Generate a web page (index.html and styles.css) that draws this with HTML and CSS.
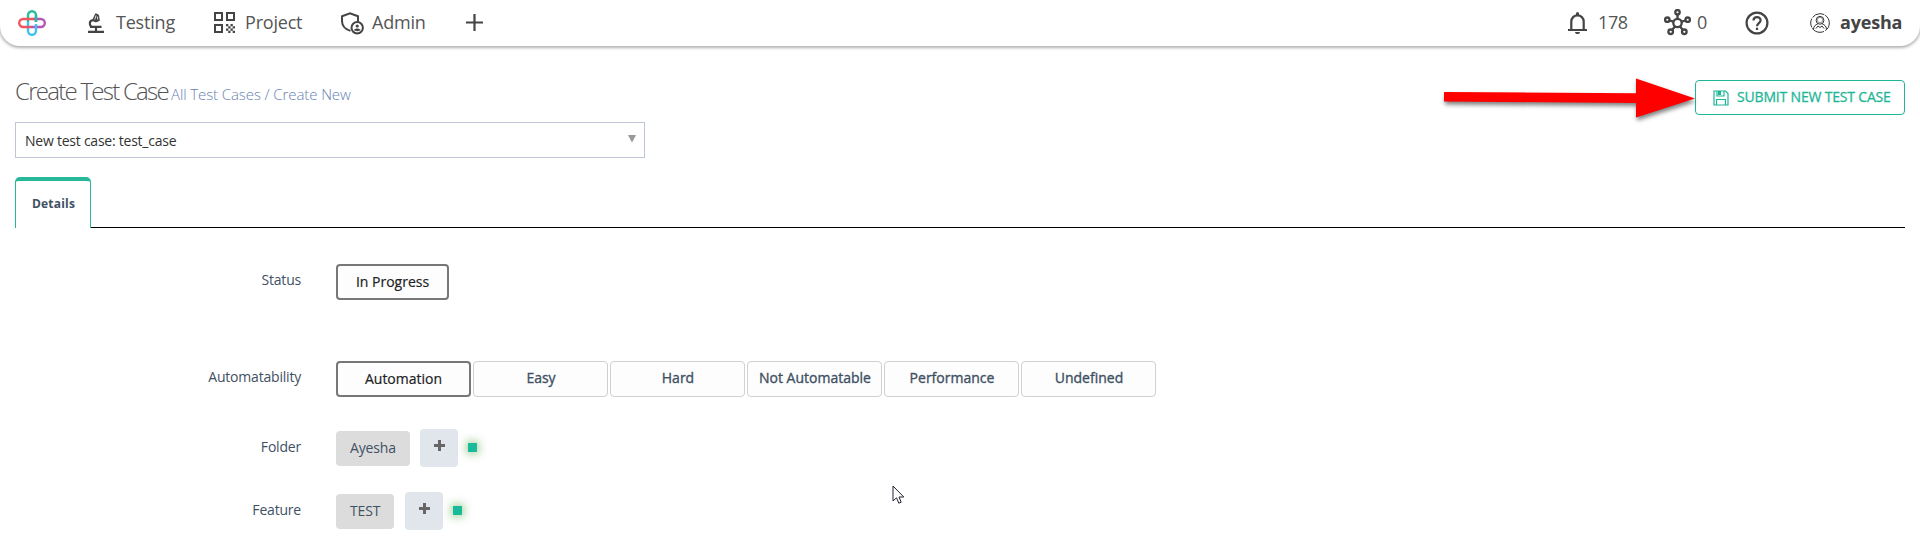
FILE: index.html
```html
<!DOCTYPE html>
<html lang="en">
<head>
<meta charset="utf-8">
<title>Create Test Case</title>
<link rel="stylesheet" href="styles.css">
</head>
<body>
<header class="topbar">
  <svg class="logo" width="28" height="28" viewBox="0 0 28 28" fill="none" stroke-width="2.4">
    <path d="M10 13V6.200a4 4 0 0 1 8 0V13" stroke="#27bd9c"/>
    <path d="M15 10h7.800a4 4 0 0 1 0 8H13" stroke="#b755b4"/>
    <path d="M18 15v6.800a4 4 0 0 1-8 0V13" stroke="#3fc1f5"/>
    <path d="M16 10H5.200a4 4 0 0 0 0 8H13" stroke="#f0555f"/>
    <path d="M18 6v7" stroke="#27bd9c"/>
  </svg>
  <nav class="menu">
    <a class="item testing">
      <svg width="18" height="22" viewBox="0 0 18 22" fill="none" stroke="#444" stroke-width="2.200">
        <path d="M1 19.800h16M9 19v-4M3 14.900h11.500"/><path d="M6 8.200C2.300 8.700 2 12.300 4.200 14.800"/>
        <path d="M5.500 8.500 8.700 1.700l2.800 1.400.8 5.400-3.400 1.400z" fill="#444" stroke-width="1"/><path d="m9 3.500-1.200 4M10.300 4.500l.5 3" stroke="#fff" stroke-width=".8"/>
      </svg><span>Testing</span></a>
    <a class="item project">
      <svg width="21" height="21" viewBox="0 0 21 21" fill="none" stroke="#444" stroke-width="2">
        <path d="M1 1h7v7H1zM13 1h7v7h-7zM1 13h7v7H1z"/>
        <path fill="#444" stroke="none" d="M12 12h2.300v2.300H12zM16.500 12h2.300v2.300h-2.300zM14.200 14.200h2.300v2.300h-2.300zM18.700 14.200H21v2.300h-2.300zM12 16.400h2.300v2.300H12zM16.500 16.400h2.300v2.300h-2.300zM14.200 18.700h2.300V21h-2.300zM18.700 18.700H21V21h-2.300z"/>
      </svg><span>Project</span></a>
    <a class="item admin">
      <svg width="23" height="23" viewBox="0 0 23 23" fill="none" stroke="#444" stroke-width="2">
        <path d="M9.500 18.900C4.300 17.500 1 13.500 1 9V4.300l8-3 8 3V9.500"/>
        <circle cx="16.200" cy="15.800" r="5.700"/><circle cx="16.200" cy="14" r="1.600" fill="#444" stroke="none"/>
        <path d="M12.900 18c1.300-2 5.300-2 6.600 0-1.500 1.500-5.100 1.500-6.600 0z" fill="#444" stroke="none"/>
      </svg><span>Admin</span></a>
    <a class="item add">
      <svg width="17" height="17" viewBox="0 0 17 17" stroke="#444" stroke-width="2.200"><path d="M8.500 0v17M0 8.500h17"/></svg></a>
  </nav>
  <div class="tools">
    <a class="item bell">
      <svg width="19" height="22" viewBox="0 0 19 22" fill="none" stroke="#444" stroke-width="2.200">
        <path d="M0 18h19M3.300 17.500V9.500a6.200 6.200 0 0 1 12.400 0v8"/>
        <path d="M8 3V1.500a1.500 1.500 0 0 1 3 0V3zM7 20h5a2.500 2.100 0 0 1-5 0z" fill="#444" stroke="none"/>
      </svg><span>178</span></a>
    <a class="item hub">
      <svg width="27" height="27" viewBox="0 0 27 27" fill="none" stroke="#444" stroke-width="2.300">
        <circle cx="13.500" cy="14" r="4.200"/><circle cx="13.500" cy="3.300" r="2.200"/><circle cx="3.300" cy="10.700" r="2.200"/><circle cx="23.700" cy="10.700" r="2.200"/><circle cx="6.700" cy="22.800" r="2.300"/><circle cx="20.300" cy="22.800" r="2.300"/>
        <path d="M13.500 5.700v4M5.600 11.500l3.800 1.200M21.400 11.500l-3.800 1.200M8.100 20.900l2.800-3.400M18.900 20.900l-2.800-3.400"/>
      </svg><span>0</span></a>
    <a class="item help">
      <svg width="24" height="24" viewBox="0 0 24 24" fill="none" stroke="#444" stroke-width="2.200">
        <circle cx="12" cy="12" r="10.400"/><path d="M8.500 9.600c0-4.800 7.100-4.500 7.100-.4 0 2.800-3.600 3.100-3.600 6"/><path d="M12 16.700v2.300"/>
      </svg></a>
    <a class="item user">
      <svg width="20" height="20" viewBox="0 0 20 20" fill="none" stroke="#333" stroke-width="1">
        <circle cx="10" cy="10" r="9.300" stroke-dasharray="9 1.500 13 1"/><circle cx="10" cy="7.300" r="3.900"/><circle cx="10" cy="7" r="2.700" stroke-width=".5"/>
        <path d="M3.500 16.200c.3-3.200 2-4.500 4.200-5.100M16.500 16.200c-.3-3.200-2-4.500-4.200-5.100M6 15.500l2-2.500 2 1.500 2-1.500 2 2.500"/>
      </svg><span>ayesha</span></a>
  </div>
</header>
<main class="page">
  <div class="heading">
    <h1 class="title">Create Test Case</h1>
    <span class="crumbs">All Test Cases / Create New</span>
    <svg class="arrow" width="262" height="50" viewBox="0 0 262 50"><path d="M4 17 196 18.300V3.500L255 23.500 196 42.500V28L4 26.500z" fill="#fe0000"/></svg>
    <button class="submit">
      <svg width="16" height="16" viewBox="0 0 16 16" fill="none" stroke="#1fb698" stroke-width="1.200"><path d="M1 1h11.500L15 3.500V15H1zM3.500 15V9.500h9V15M4 1v5h7V1"/><path d="M5 1h3v4H5z" fill="#1fb698" stroke="none"/></svg>
      <span>SUBMIT NEW TEST CASE</span></button>
  </div>
  <div class="select"><span>New test case: test_case</span>
    <svg width="8" height="7" viewBox="0 0 8 7"><path d="M0 0h8L4.300 7h-.6z" fill="#999"/></svg></div>
  <div class="tabs"><div class="tab"><span>Details</span></div></div>
  <div class="form">
    <div class="row status"><span class="label">Status</span><span class="option active small">In Progress</span></div>
    <div class="row auto"><span class="label">Automatability</span>
      <div class="options"><span class="option active">Automation</span><span class="option">Easy</span><span class="option">Hard</span><span class="option">Not Automatable</span><span class="option">Performance</span><span class="option">Undefined</span></div></div>
    <div class="row folder"><span class="label">Folder</span><span class="chip">Ayesha</span>
      <span class="plus"><svg width="11" height="11" viewBox="0 0 11 11"><path d="M5.500 0v11M0 5.500h11" stroke="#666" stroke-width="3"/></svg></span><i class="dot"></i></div>
    <div class="row feature"><span class="label">Feature</span><span class="chip">TEST</span>
      <span class="plus"><svg width="11" height="11" viewBox="0 0 11 11"><path d="M5.500 0v11M0 5.500h11" stroke="#666" stroke-width="3"/></svg></span><i class="dot"></i></div>
  </div>
</main>
<svg class="cursor" width="14" height="21" viewBox="0 0 14 21"><path d="M1 1v15l3.500-3.200 2.300 5.400 2.400-1L7 12h4.800z" fill="#fff" stroke="#223" stroke-width="1"/></svg>
</body>
</html>
```
FILE: styles.css
```css
* { box-sizing: border-box; }
body { margin: 0; height: 538px; overflow: hidden; background: #fff; color: #3f5064; font: 14px/20px "Open Sans", sans-serif; }
svg { display: block; flex: none; }
span { white-space: nowrap; }
.topbar { display: flex; align-items: center; height: 46px; padding-left: 18px; border-radius: 0 0 20px 20px; box-shadow: 0 1px 3px 1px rgba(0,0,0,.3); color: #555; font-size: 18px; line-height: 24px; letter-spacing: -.2px; }
.menu, .tools, .item { display: flex; align-items: center; }
.menu { margin-left: 41px; }
.tools { margin-left: auto; }
.item { height: 46px; flex: none; padding-bottom: 1px; }
.menu span, .tools span { padding-bottom: 2px; }
.testing { width: 127px; gap: 11px; }
.project { width: 127px; gap: 10px; }
.admin { width: 125px; gap: 8px; padding-top: 2px; }
.admin span { padding-bottom: 4px; }
.bell { width: 96px; gap: 11px; letter-spacing: -.4px; }
.hub { width: 81px; gap: 6px; padding-bottom: 2px; }
.tools .hub span { padding-bottom: 1px; }
.help { width: 65px; }
.user { width: 110px; gap: 10px; font-weight: 700; color: #444; }
.logo { margin-bottom: 1px; }
.page { padding: 0 15px; }
.heading { display: flex; height: 76px; padding-top: 31px; }
.title { margin: -1px 0 0; font-size: 24px; line-height: 30px; font-weight: 300; letter-spacing: -1.740px; color: #555; width: 156px; white-space: nowrap; }
.crumbs { font-size: 15px; line-height: 35px; font-weight: 300; letter-spacing: -.1px; color: #6882b2; }
.arrow { margin: -2px -7px 0 auto; filter: drop-shadow(1px 3px 2px rgba(0,0,0,.5)); z-index: 1; }
.submit { display: flex; align-items: center; gap: 8px; width: 210px; height: 35px; margin-top: 3px; padding: 0 0 0 17px; border: 1px solid #1fb698; border-radius: 4px; background: #fff; color: #1fb698; font: 14px/20px "Open Sans", sans-serif; letter-spacing: -.18px; -webkit-text-stroke: .3px #1fb698; }
.submit span { padding-bottom: 2px; }
.select { display: flex; align-items: center; justify-content: space-between; width: 630px; height: 36px; padding: 0 8px 0 9px; border: 1px solid #bdc5d7; color: #333; letter-spacing: -.24px; }
.select span { padding-top: 2px; }
.select svg { margin-bottom: 4px; }
.tabs { height: 51px; margin-top: 19px; border-bottom: 1px solid #000; }
.tab { width: 76px; height: 51px; padding: 13px 0 0 1px; border: 1px solid #26b899; border-top-width: 4px; border-bottom: 0; border-radius: 5px 5px 0 0; background: #fff; text-align: center; font-size: 12px; font-weight: 700; letter-spacing: .2px; }
.row { display: flex; align-items: flex-start; }
.label { width: 286px; margin-right: 35px; text-align: right; letter-spacing: -.2px; }
.status { margin-top: 36px; height: 97px; }
.status .label, .auto .label { padding-top: 6px; }
.auto { height: 68px; }
.folder, .feature { height: 63px; }
.folder .label, .feature .label { padding-top: 8px; }
.options { display: flex; gap: 2px; }
.option { width: 135px; height: 36px; padding-left: 1px; border: 1px solid #d0d0d0; border-radius: 4px; background: #fdfdfd; text-align: center; line-height: 32px; -webkit-text-stroke: .35px currentColor; }
.option.active { padding-left: 0; border: 2px solid #777; color: #222; line-height: 31px; -webkit-text-stroke-width: .2px; }
.option.small { width: 113px; }
.chip { height: 35px; margin-top: 2px; padding: 7px 14px; border-radius: 4px; background: #dcdcdc; letter-spacing: -.15px; }
.folder .chip { width: 74px; }
.feature .chip { width: 58px; }
.plus { display: flex; justify-content: center; width: 38px; height: 38px; padding-top: 11px; margin: 0 10px; border-radius: 4px; background: #e1e6ed; }
.feature .plus { margin-left: 11px; }
.dot { width: 9px; height: 9px; margin-top: 14px; background: #1ab999; box-shadow: 0 0 9px 2px rgba(80,165,60,.5); }
.cursor { position: absolute; left: 892px; top: 485px; }
```
